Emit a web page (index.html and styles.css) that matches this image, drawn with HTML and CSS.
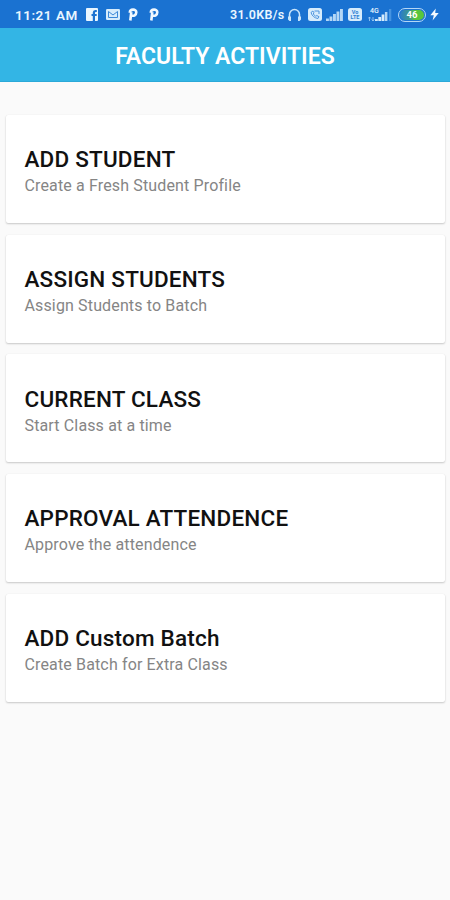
FILE: index.html
```html
<!DOCTYPE html>
<html lang="en">
<head>
    <meta charset="UTF-8">
    <meta name="viewport" content="width=device-width, initial-scale=1.0">
    <title>Faculty Activities</title>
    <link rel="stylesheet" href="styles.css">
</head>
<body>
    <div class="status-bar">
        <div class="status-left">
            <span class="time">11:21 AM</span>
            <svg class="icon-facebook" width="12" height="13" viewBox="0 0 12 13">
                <path fill="#e9f6ff" fill-rule="evenodd" d="M1 0h10a1 1 0 0 1 1 1v11a1 1 0 0 1-1 1H9V8h1.700V6H9V4.800q0-.8.8-.8h1V2H9.200Q6.800 2 6.800 4.500V6H5.500v2h1.300v5H1a1 1 0 0 1-1-1V1a1 1 0 0 1 1-1z"/>
            </svg>
            <svg class="icon-mail" width="14" height="11" viewBox="0 0 14 11">
                <rect width="14" height="11" rx="1.200" fill="#d7ecfc"/>
                <path d="M2.500 2.500v6h9v-6L7 6z" fill="none" stroke="#3c88d8" stroke-width="1"/>
            </svg>
            <svg class="icon-p" width="10" height="13" viewBox="0 0 10 13">
                <path d="M2.300 12.500 3.300 4M1.800 4.800C1.800.8 8.300.6 8.300 4.300c0 2.800-2.600 4.100-4.800 3.200" fill="none" stroke="#f2f9ff" stroke-width="2.600"/>
            </svg>
            <svg class="icon-p" width="10" height="13" viewBox="0 0 10 13">
                <path d="M2.300 12.500 3.300 4M1.800 4.800C1.800.8 8.300.6 8.300 4.300c0 2.800-2.600 4.100-4.800 3.200" fill="none" stroke="#f2f9ff" stroke-width="2.600"/>
            </svg>
        </div>
        <div class="status-right">
            <span class="speed">31.0KB/s</span>
            <svg class="icon-headset" width="15" height="14" viewBox="0 0 15 14">
                <path d="M2.500 10V6.500a5 5 0 0 1 10 0V10" fill="none" stroke="#c8e4fb" stroke-width="1.500"/>
                <path d="M1 8.500h3V13H2.500L1 11.500zM14 8.500h-3V13h1.500L14 11.500z" fill="#c8e4fb"/>
            </svg>
            <svg class="icon-call" width="14" height="13" viewBox="0 0 14 13">
                <rect width="14" height="13" rx="2.500" fill="#d7ecfc"/>
                <path d="M3 4.500c1 3.500 3.500 5.500 7 6l1-1.800-2.200-1.200-1.200.8L5.300 6l.6-1.300-1-1.700zM6.500 3h4.500v3" fill="none" stroke="#4d94de" stroke-width="1"/>
            </svg>
            <svg class="icon-signal" width="17" height="12" viewBox="0 0 17 12">
                <path d="M0 9.500h2.900V12H0zM3.500 7.500h2.900V12H3.500zM7 5h2.900v7H7zM10.500 2.500h2.900V12h-2.900zM14 0h2.900v12H14z" fill="#b4d7f6"/>
            </svg>
            <div class="volte"><span>Vo</span><span>LTE</span></div>
            <div class="network">
                <span class="network-type">4G</span>
                <svg width="24" height="14" viewBox="0 0 24 14">
                    <path d="M1.500 13V9m-1.300 1.500L1.500 9l1.300 1.500M5 9v4m-1.300-1.500L5 13l1.300-1.500" fill="none" stroke="#a6cff4" stroke-width=".8"/>
                    <path d="M7 11h2.800v2H7zM10.300 9h2.800v4h-2.800zM13.600 6.500h2.800V13h-2.800z" fill="#d7ecfc"/>
                    <path d="M16.900 4h2.500v9h-2.500z" fill="#b4d7f6"/>
                    <path d="M21 1h2.300v12H21z" fill="#4593e1"/>
                </svg>
            </div>
            <div class="battery"><span>46</span></div>
            <svg class="icon-bolt" width="9" height="13" viewBox="0 0 9 13">
                <path d="M5.800.5.300 7.300h3.500L2.600 12.500 8.700 5H5.200z" fill="#f2f9ff"/>
            </svg>
        </div>
    </div>

    <header class="toolbar">
        <h1>FACULTY ACTIVITIES</h1>
    </header>

    <main class="card-list">
        <div class="card">
            <h2>ADD STUDENT</h2>
            <p>Create a Fresh Student Profile</p>
        </div>
        <div class="card">
            <h2>ASSIGN STUDENTS</h2>
            <p>Assign Students to Batch</p>
        </div>
        <div class="card">
            <h2>CURRENT CLASS</h2>
            <p>Start Class at a time</p>
        </div>
        <div class="card">
            <h2>APPROVAL ATTENDENCE</h2>
            <p>Approve the attendence</p>
        </div>
        <div class="card">
            <h2>ADD Custom Batch</h2>
            <p>Create Batch for Extra Class</p>
        </div>
    </main>
</body>
</html>
```
FILE: styles.css
```css
* {
    margin: 0;
    padding: 0;
    box-sizing: border-box;
}

body {
    font-family: Roboto, "Liberation Sans", sans-serif;
    background: #fafafa;
    min-height: 100vh;
}

/* Status bar */
.status-bar {
    height: 28px;
    padding: 1px 11px 0 15px;
    background: #1a72d1;
    color: #e9f6ff;
    display: flex;
    align-items: center;
    justify-content: space-between;
}

.status-left,
.status-right {
    display: flex;
    align-items: center;
}

.time {
    width: 71px;
    font-size: 13.5px;
    font-weight: 600;
    letter-spacing: 0.5px;
    line-height: 16px;
    white-space: nowrap;
}

.icon-mail {
    margin-left: 8px;
}

.icon-p {
    margin-left: 8px;
}

.icon-p + .icon-p {
    margin-left: 11px;
}

.speed {
    width: 57px;
    font-size: 12.5px;
    font-weight: 600;
    letter-spacing: 0.3px;
    white-space: nowrap;
}

.icon-call {
    margin-left: 6px;
}

.icon-signal {
    margin-left: 4px;
}

.volte {
    width: 14px;
    height: 13px;
    margin-left: 5px;
    border-radius: 2.5px;
    background: #d7ecfc;
    color: #2f7fd3;
    font-size: 5.5px;
    font-weight: 700;
    line-height: 5px;
    display: flex;
    flex-direction: column;
    align-items: center;
    justify-content: center;
}

.network {
    position: relative;
    height: 14px;
    margin-left: 6px;
}

.network-type {
    position: absolute;
    top: -1px;
    left: 2px;
    font-size: 7px;
    line-height: 8px;
    font-weight: 500;
}

.network svg {
    display: block;
}

.battery {
    width: 28px;
    height: 14px;
    margin-left: 6px;
    border: 1.5px solid #b4d7f6;
    border-radius: 7px;
    padding: 1px;
    display: flex;
}

.battery span {
    flex: 1;
    border-radius: 5px;
    background: linear-gradient(to right, #2b7cc9 0%, #3f9d83 45%, #58c63c 60%);
    color: #fff;
    font-size: 9.5px;
    font-weight: 700;
    line-height: 10px;
    text-align: center;
}

.icon-bolt {
    margin-left: 4px;
}

/* Title bar */
.toolbar {
    height: 54px;
    padding-top: 4px;
    background: #33b5e5;
    border-bottom: 1px solid #2ba9d8;
    display: flex;
    align-items: center;
    justify-content: center;
}

.toolbar h1 {
    color: #fff;
    font-size: 23px;
    font-weight: 600;
    line-height: 28px;
}

/* Activity cards */
.card-list {
    padding: 33.2px 5.5px 0 6px;
    display: flex;
    flex-direction: column;
    gap: 11.6px;
}

.card {
    height: 108px;
    padding: 30.2px 18.5px 0;
    background: #fff;
    border-radius: 2px;
    box-shadow: 0 1px 2px rgba(0, 0, 0, 0.2), 0 0 1px rgba(0, 0, 0, 0.08);
}

.card h2 {
    color: #111;
    font-size: 22.5px;
    font-weight: 500;
    letter-spacing: 0.2px;
    line-height: 28px;
}

.card p {
    color: #858585;
    font-size: 16px;
    letter-spacing: 0.14px;
    line-height: 26px;
}
```
